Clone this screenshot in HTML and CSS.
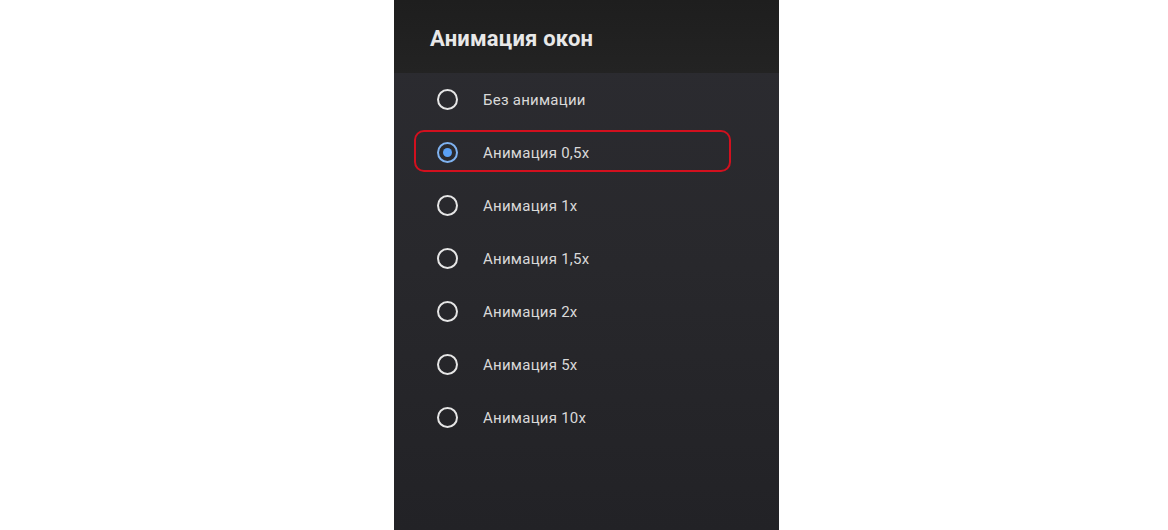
FILE: index.html
```html
<!DOCTYPE html>
<html lang="ru">
<head>
<meta charset="utf-8">
<title>Анимация окон</title>
<link rel="stylesheet" href="styles.css">
</head>
<body>
<div class="page">
  <div class="panel">
    <div class="header"><h1 class="title">Анимация окон</h1></div>
    <ul class="list">
      <li class="row"><span class="radio"></span><span class="label">Без анимации</span></li>
      <li class="row selected"><span class="radio checked"></span><span class="label">Анимация 0,5x</span></li>
      <li class="row"><span class="radio"></span><span class="label">Анимация 1x</span></li>
      <li class="row"><span class="radio"></span><span class="label">Анимация 1,5x</span></li>
      <li class="row"><span class="radio"></span><span class="label">Анимация 2x</span></li>
      <li class="row"><span class="radio"></span><span class="label">Анимация 5x</span></li>
      <li class="row"><span class="radio"></span><span class="label">Анимация 10x</span></li>
    </ul>
  </div>
</div>
</body>
</html>
```
FILE: styles.css
```css
html, body {
  margin: 0;
  padding: 0;
  background: #ffffff;
  font-family: Roboto, "Noto Sans", sans-serif;
}
.page {
  display: flex;
  height: 530px;
  padding-left: 394px;
}
.panel {
  width: 385px;
  height: 530px;
  display: flex;
  flex-direction: column;
  background: linear-gradient(to bottom, #2c2c31 0%, #28282c 50%, #222226 100%);
}
.header {
  height: 73px;
  display: flex;
  align-items: center;
  padding-left: 36px;
  background: linear-gradient(to bottom, #1e1e1e 0%, #232323 100%);
  flex-shrink: 0;
}
.title {
  margin: 0;
  padding-top: 3px;
  font-size: 22px;
  font-weight: 700;
  color: #e8e8e8;
  letter-spacing: 0.2px;
}
.list {
  list-style: none;
  margin: 0;
  padding: 0;
}
.row {
  position: relative;
  height: 53px;
  display: flex;
  align-items: center;
  padding-left: 43px;
}
.row.selected::before {
  content: "";
  position: absolute;
  left: 20px;
  top: 4px;
  width: 313px;
  height: 38px;
  border: 2px solid #d2101e;
  border-radius: 10px;
}
.radio {
  width: 17px;
  height: 17px;
  border: 2px solid #e6e6e6;
  border-radius: 50%;
  display: flex;
  align-items: center;
  justify-content: center;
  flex-shrink: 0;
}
.radio.checked {
  border-color: #7fb2f0;
}
.radio.checked::after {
  content: "";
  width: 9px;
  height: 9px;
  border-radius: 50%;
  background: #5aa0f5;
}
.label {
  margin-left: 25px;
  font-size: 15px;
  letter-spacing: 0.25px;
  color: #d9d9d9;
  padding-top: 1px;
}
```
